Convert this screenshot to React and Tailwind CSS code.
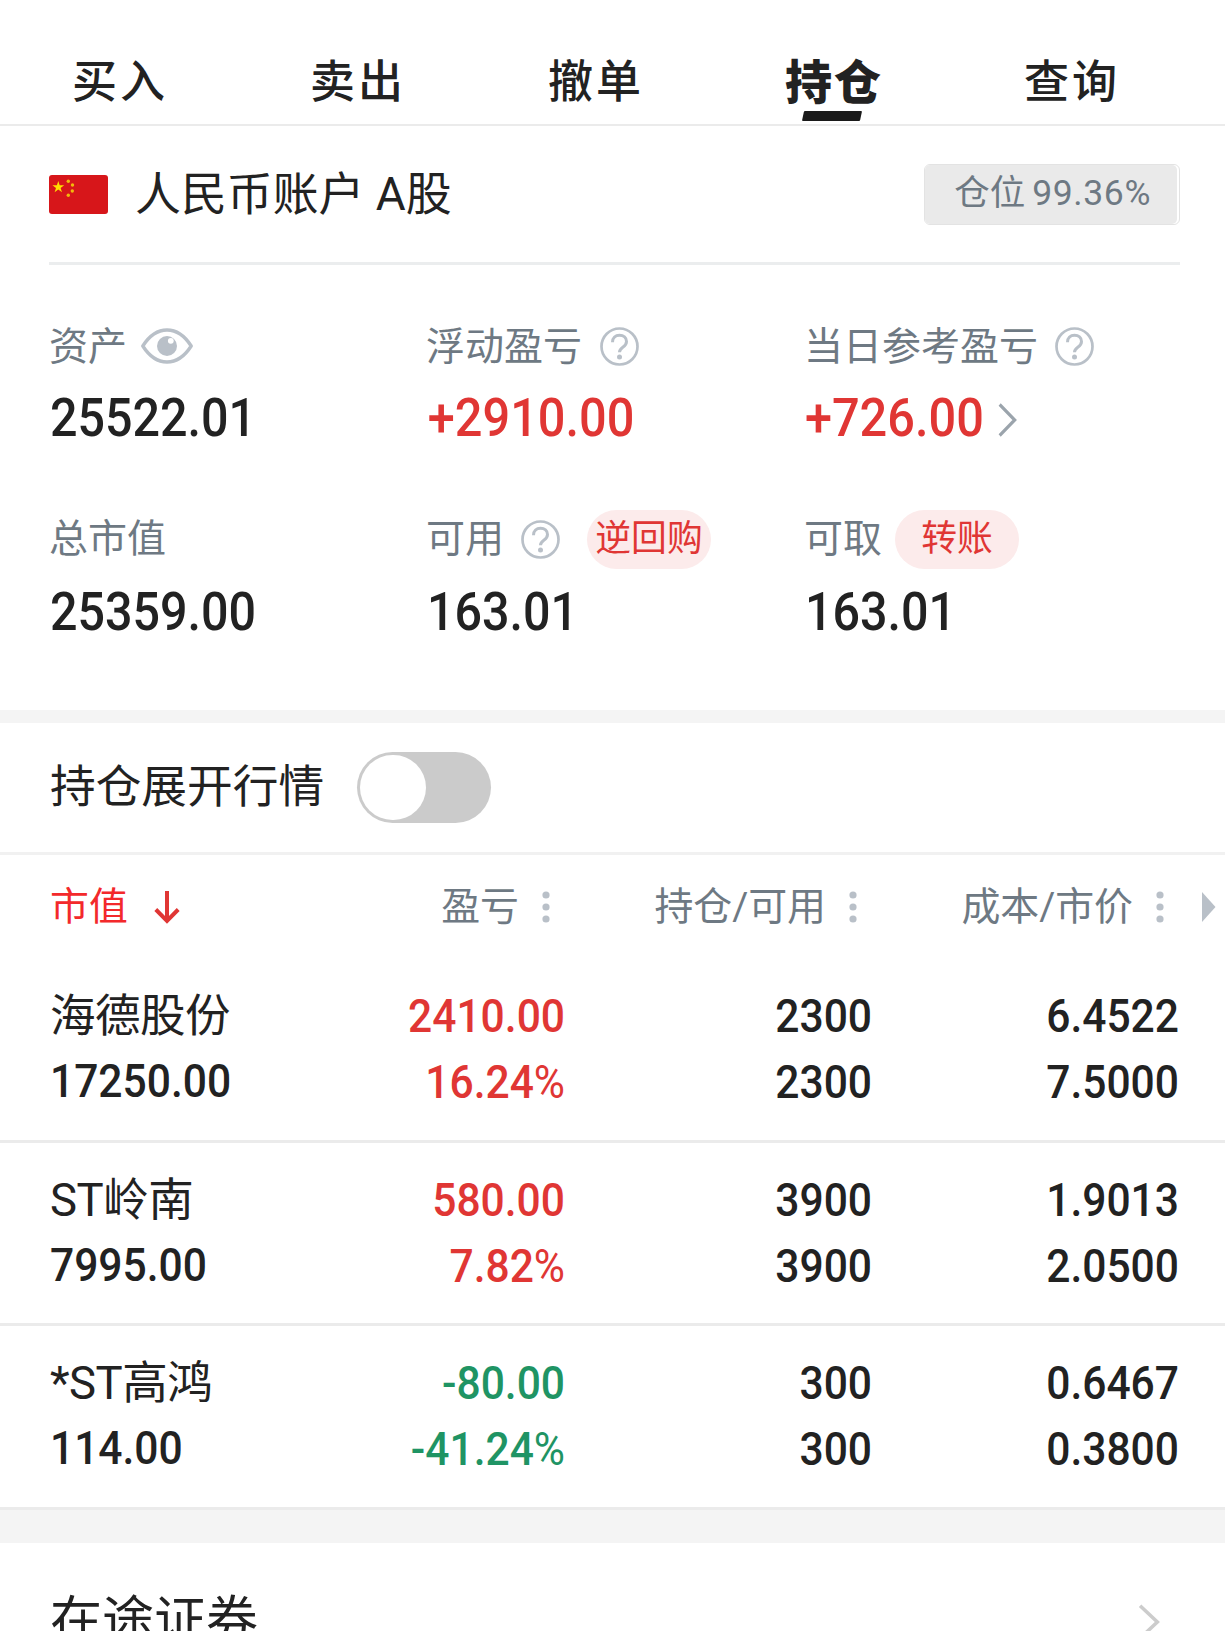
import React, { Component } from 'react';

const tabs = ['买入', '卖出', '撤单', '持仓', '查询'];

const columns = ['盈亏', '持仓/可用', '成本/市价'];

const holdings = [
  {
    id: 1,
    name: '海德股份',
    value: '17250.00',
    profit: '2410.00',
    percent: '16.24',
    total: '2300',
    available: '2300',
    cost: '6.4522',
    price: '7.5000',
    up: true,
  },
  {
    id: 2,
    name: 'ST岭南',
    value: '7995.00',
    profit: '580.00',
    percent: '7.82',
    total: '3900',
    available: '3900',
    cost: '1.9013',
    price: '2.0500',
    up: true,
  },
  {
    id: 3,
    name: '*ST高鸿',
    value: '114.00',
    profit: '-80.00',
    percent: '-41.24',
    total: '300',
    available: '300',
    cost: '0.6467',
    price: '0.3800',
    up: false,
  },
];

const FlagIcon = () => (
  <svg className="block w-[59px] h-[39px] mt-px" viewBox="0 0 59 39">
    <rect width="59" height="39" rx="3" fill="#d7161a" />
    <path d="M9.300 6l1.400 4.300h4.500l-3.600 2.700 1.400 4.300-3.700-2.700-3.700 2.700L7 13l-3.600-2.700h4.500z" fill="#ffde00" />
    <g fill="#f2b90c">
      <circle cx="19.300" cy="6.200" r="1.700" />
      <circle cx="23.500" cy="10" r="1.700" />
      <circle cx="23.300" cy="16" r="1.700" />
      <circle cx="19.300" cy="20.200" r="1.700" />
    </g>
  </svg>
);

const EyeIcon = () => (
  <svg className="block w-[52px] h-[36px] ml-[14px] -mt-px" viewBox="0 0 52 36" fill="none">
    <path
      d="M1.800 18C8.500 7.500 16.500 2 26 2s17.500 5.500 24.200 16C43.500 28.500 35.500 34 26 34S8.500 28.500 1.800 18z"
      stroke="#b9c0c8"
      strokeWidth="3.400"
      strokeLinejoin="round"
    />
    <circle cx="26" cy="18" r="10" fill="#b9c0c8" />
    <circle cx="29.800" cy="12.800" r="2.900" fill="#fff" />
  </svg>
);

const HelpIcon = () => (
  <svg className="block w-[39px] h-[39px]" viewBox="0 0 39 39" fill="none">
    <circle cx="19.500" cy="19.500" r="18" stroke="#b9c0c8" strokeWidth="2.700" />
    <path
      d="M12.500 15.200c0-4.400 3-7 7-7s7 2.600 7 6.300c0 2.800-1.500 4.200-3.700 5.700-2.400 1.700-3.300 2.600-3.300 5.100"
      stroke="#b9c0c8"
      strokeWidth="3"
    />
    <circle cx="19.500" cy="30" r="2.500" fill="#b9c0c8" />
  </svg>
);

const DotsIcon = () => (
  <svg className="block w-[8px] h-[32px]" viewBox="0 0 8 32" fill="#b9c0c8">
    <circle cx="4" cy="4" r="3.600" />
    <circle cx="4" cy="16" r="3.600" />
    <circle cx="4" cy="28" r="3.600" />
  </svg>
);

const Chevron = ({ className }) => (
  <svg className={className} viewBox="0 0 22 36" fill="none" stroke="currentColor" strokeWidth="3.400">
    <path d="M2 2.500L18.500 18 2 33.500" />
  </svg>
);

class App extends Component {
  constructor(props) {
    super(props);
    this.state = {
      tab: '持仓',
      expanded: false,
    };
  }

  toggleExpanded = () => {
    this.setState({ expanded: !this.state.expanded });
  };

  renderTab = (tab) => {
    const active = this.state.tab == tab;
    return (
      <button
        key={tab}
        onClick={() => this.setState({ tab })}
        className={
          active
            ? 'relative w-[238px] text-center text-[47px] leading-[60px] tracking-[2px] font-black'
            : 'relative w-[238px] text-center text-[45px] leading-[60px] tracking-[3px] font-medium'
        }
      >
        {tab}
        {active && (
          <span className="absolute top-[70px] left-[88px] w-[58px] h-[10px] bg-[#1a1a1a] rounded-[1px] -skew-x-12"></span>
        )}
      </button>
    );
  };

  renderHolding = (item) => {
    const color = item.up ? 'text-[#e03634]' : 'text-[#1f9464]';
    return (
      <div
        key={item.id}
        className="flex h-[183.667px] pl-[50px] pt-[23px] border-b-3 border-[#ebebeb] text-[46.500px] leading-[66px] font-medium"
      >
        <div className="w-[209px]">
          <p className="pt-[2px] -mb-[2px] text-[45.500px] tracking-[-0.500px] font-normal whitespace-nowrap">{item.name}</p>
          <p className="origin-left scale-x-[0.915]">{item.value}</p>
        </div>
        <div className={`w-[306px] pt-px text-right origin-right scale-x-[0.915] ${color}`}>
          <p>{item.profit}</p>
          <p>
            {item.percent}
            <span className="font-normal">%</span>
          </p>
        </div>
        <div className="w-[307px] pt-px text-right origin-right scale-x-[0.915]">
          <p>{item.total}</p>
          <p>{item.available}</p>
        </div>
        <div className="w-[307px] pt-px text-right origin-right scale-x-[0.915]">
          <p>{item.cost}</p>
          <p>{item.price}</p>
        </div>
      </div>
    );
  };

  render() {
    return (
      <div className="w-[1225px] h-[1631px] overflow-hidden bg-white text-[#222222] font-['Roboto','Noto_Sans_CJK_SC',sans-serif]">
        <nav className="flex h-[126px] pt-[41px] pl-px border-b-2 border-[#ebebeb]">
          {tabs.map((tab) => this.renderTab(tab))}
        </nav>

        <section className="px-[49px] h-[584px]">
          <div className="flex items-center h-[139px] -mr-[4px] border-b-3 border-[#ebedee]">
            <FlagIcon />
            <h1 className="ml-[27px] text-[45.900px] leading-[60px]">人民币账户 A股</h1>
            <div className="ml-auto h-[61px] w-[256px] pr-[2px] rounded-[6px] border border-[#e3e3e3]">
              <div className="flex justify-end h-[59px] pr-[26px] rounded-[5px] bg-[#eaeaea] text-[35.500px] leading-[56px] text-[#6e7983] whitespace-nowrap">
                仓位 <span className="ml-[7px] tracking-[0.600px]">99.36%</span>
              </div>
            </div>
          </div>

          <div className="grid grid-cols-[377px_378px_376px] text-[53.500px] leading-[60px] font-medium">
            <div className="h-[193px] pt-[52px]">
              <div className="flex items-center h-[59px] text-[39px] text-[#6e7983] font-normal">
                资产
                <EyeIcon />
              </div>
              <p className="pt-[12px] pl-px origin-left scale-x-[0.905]">25522.01</p>
            </div>
            <div className="h-[193px] pt-[52px]">
              <div className="flex items-center gap-[18px] h-[59px] text-[39px] text-[#6e7983] font-normal">
                浮动盈亏
                <HelpIcon />
              </div>
              <p className="pt-[12px] pl-[2px] origin-left scale-x-[0.91] text-[#e03634]">+2910.00</p>
            </div>
            <div className="h-[193px] pt-[52px]">
              <div className="flex items-center gap-[17px] h-[59px] text-[39px] text-[#6e7983] font-normal">
                当日参考盈亏
                <HelpIcon />
              </div>
              <div className="flex items-center pt-[12px] pl-px origin-left scale-x-[0.91] text-[#e03634]">
                +726.00
                <Chevron className="block mt-[4px] ml-[14px] w-[24px] h-[36px] text-[#9ba4ac]" />
              </div>
            </div>

            <div className="pt-[52px]">
              <div className="flex items-center h-[59px] text-[39px] text-[#6e7983] font-normal">
                <span className="-mt-px">总市值</span>
              </div>
              <p className="pt-[13px] pl-px origin-left scale-x-[0.905]">25359.00</p>
            </div>
            <div className="pt-[52px]">
              <div className="flex items-center h-[59px] text-[39px] text-[#6e7983] font-normal">
                <span className="-mt-px mr-[17px]">可用</span>
                <HelpIcon />
                <span className="ml-[27px] w-[124px] h-[59px] text-center text-[35.800px] leading-[59px] text-[#e03634] bg-[#fcebeb] rounded-full">
                  逆回购
                </span>
              </div>
              <p className="pt-[13px] pl-px origin-left scale-x-[0.905]">163.01</p>
            </div>
            <div className="pt-[52px]">
              <div className="flex items-center h-[59px] text-[39px] text-[#6e7983] font-normal">
                <span className="-mt-px">可取</span>
                <span className="ml-[13px] w-[124px] h-[59px] text-center text-[35.800px] leading-[59px] text-[#e03634] bg-[#fcebeb] rounded-full">
                  转账
                </span>
              </div>
              <p className="pt-[13px] pl-px origin-left scale-x-[0.905]">163.01</p>
            </div>
          </div>
        </section>

        <div className="h-[13px] bg-[#f4f4f4]"></div>

        <div className="flex items-center h-[132px] pl-[50px] border-b-3 border-[#f1f1f1]">
          <span className="text-[45.700px] leading-[60px]">持仓展开行情</span>
          <button
            onClick={this.toggleExpanded}
            className={
              this.state.expanded
                ? 'flex items-center justify-end ml-[33px] p-[3px] w-[134px] h-[71px] rounded-full bg-[#e03634]'
                : 'flex items-center ml-[33px] p-[3px] w-[134px] h-[71px] rounded-full bg-[#cbcbcb]'
            }
          >
            <span className="w-[66px] h-[65px] rounded-full bg-white"></span>
          </button>
        </div>

        <div className="flex items-center h-[104px] pl-[50px] text-[38.900px] leading-[60px] text-[#6e7983]">
          <div className="flex items-center w-[200px] text-[#f3292b]">
            市值
            <svg className="block ml-[26px] w-[26px] h-[34px]" viewBox="0 0 26 34" fill="none" stroke="#e03634" strokeWidth="4">
              <path d="M13 1v30M1.800 19.500L13 31l11.200-11.500" />
            </svg>
          </div>
          {columns.map((column) => (
            <div key={column} className="flex items-center justify-end gap-[23px] w-[307px] pr-[7px]">
              {column}
              <DotsIcon />
            </div>
          ))}
          <svg className="block ml-[31px] w-[14px] h-[30px]" viewBox="0 0 14 30" fill="#b9c0c8">
            <path d="M0 0l13.500 15L0 30z" />
          </svg>
        </div>

        <div>{holdings.map((item) => this.renderHolding(item))}</div>

        <div className="h-[33px] bg-[#f4f4f4]"></div>

        <div className="flex items-start justify-between pt-[49px] pl-[50px] pr-[64px]">
          <span className="text-[52px] leading-[60px]">在途证券</span>
          <Chevron className="block mt-[11px] w-[23px] h-[38px] text-[#cccccc]" />
        </div>
      </div>
    );
  }
}

export default App;
